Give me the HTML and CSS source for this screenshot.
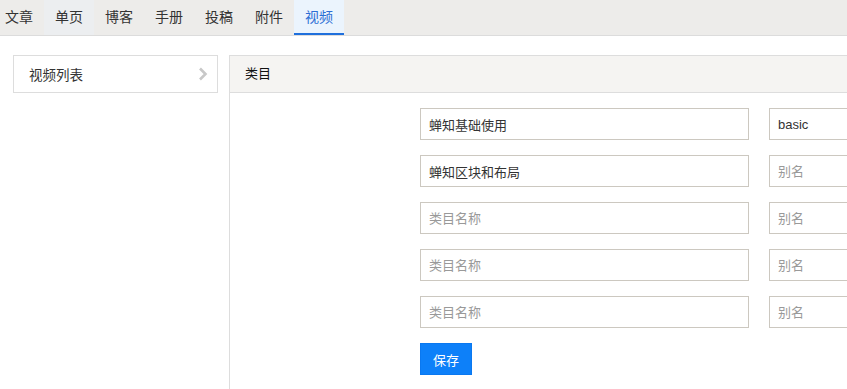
FILE: index.html
```html
<!DOCTYPE html>
<html lang="zh-CN">
<head>
<meta charset="utf-8">
<title>视频</title>
<link rel="stylesheet" href="styles.css">
</head>
<body>
<nav class="topnav">
  <a class="tab">文章</a>
  <a class="tab hover">单页</a>
  <a class="tab">博客</a>
  <a class="tab">手册</a>
  <a class="tab">投稿</a>
  <a class="tab">附件</a>
  <a class="tab active">视频</a>
</nav>
<main class="main">
  <aside class="side">
    <a class="side-item">
      <span>视频列表</span>
      <svg class="chev" width="10" height="14" viewBox="0 0 10 14"><polyline points="2,1.5 7.5,7 2,12.5" fill="none" stroke="#c8c8c8" stroke-width="2.6"/></svg>
    </a>
  </aside>
  <section class="panel">
    <div class="panel-head">类目</div>
    <div class="panel-body">
      <div class="row"><input class="name" value="蝉知基础使用" placeholder="类目名称"><input class="alias" value="basic" placeholder="别名"></div>
      <div class="row"><input class="name" value="蝉知区块和布局" placeholder="类目名称"><input class="alias" placeholder="别名"></div>
      <div class="row"><input class="name" placeholder="类目名称"><input class="alias" placeholder="别名"></div>
      <div class="row"><input class="name" placeholder="类目名称"><input class="alias" placeholder="别名"></div>
      <div class="row"><input class="name" placeholder="类目名称"><input class="alias" placeholder="别名"></div>
      <button class="btn">保存</button>
    </div>
  </section>
</main>
</body>
</html>
```
FILE: styles.css
```css
html, body {
  margin: 0;
  padding: 0;
  height: 100%;
  overflow: hidden;
  background: #fff;
  font-family: "Liberation Sans", "Noto Sans CJK SC", sans-serif;
  color: #333;
}
body {
  display: flex;
  flex-direction: column;
}
.topnav {
  flex: none;
  display: flex;
  height: 35px;
  background: #edecea;
  border-bottom: 1px solid #dcdcdc;
  padding-left: 0;
  margin-left: -6px;
}
.tab {
  box-sizing: border-box;
  width: 50px;
  height: 35px;
  line-height: 35px;
  font-size: 14px;
  text-align: center;
  color: #333;
  cursor: pointer;
}
.tab.hover { background: #eceef0; }
.tab.active {
  background: #ebf4fd;
  color: #2c6ed4;
  border-bottom: 2px solid #1f6fdc;
}
.main {
  flex: 1;
  min-height: 0;
  display: flex;
  align-items: stretch;
  gap: 11px;
  padding: 19px 0 0 13px;
}
.side {
  flex: none;
  align-self: flex-start;
  width: 205px;
  border: 1px solid #dddddd;
  box-sizing: border-box;
}
.side-item {
  display: flex;
  align-items: center;
  justify-content: space-between;
  height: 36px;
  padding: 0 9px 0 15px;
  font-size: 13.5px;
  color: #333;
}
.chev { display: block; }
.panel {
  flex: 1;
  min-width: 0;
  border: 1px solid #dddddd;
  border-right: none;
  border-bottom: none;
  box-sizing: border-box;
}
.panel-head {
  height: 36px;
  line-height: 36px;
  background: #f5f4f2;
  border-bottom: 1px solid #dddddd;
  padding-left: 15px;
  font-size: 13px;
  font-weight: 400;
  color: #111;
}
.panel-body {
  padding: 15px 0 0 190px;
}
.row {
  display: flex;
  gap: 20px;
  margin-bottom: 15px;
}
input {
  box-sizing: border-box;
  height: 32px;
  border: 1px solid #ccc8c0;
  border-radius: 0;
  padding: 0 8px;
  font-family: "Liberation Sans", "Noto Sans CJK SC", sans-serif;
  font-size: 13px;
  color: #333;
  background: #fff;
  outline: none;
}
input::placeholder { color: #999; }
.name { flex: none; width: 329px; }
.alias { flex: 1; min-width: 0; border-right-width: 0; }
.btn {
  box-sizing: border-box;
  width: 52px;
  height: 32px;
  border: 1px solid #0a78f0;
  background: #0d80f9;
  color: #fff;
  font-family: "Liberation Sans", "Noto Sans CJK SC", sans-serif;
  font-size: 13px;
  padding: 0;
  border-radius: 0;
}
```
